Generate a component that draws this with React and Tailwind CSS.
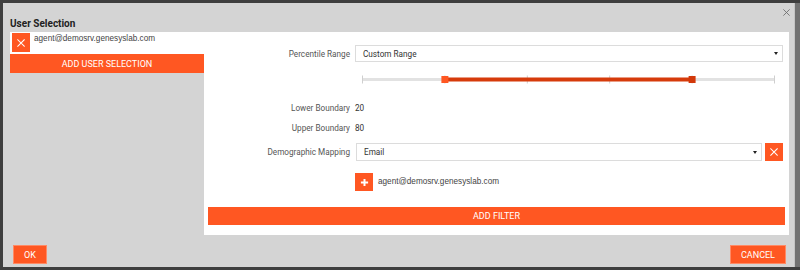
import React from "react";

const XIcon = ({ size = 8, stroke = "#fff", sw = 1.3 }) => (
  <svg width={size} height={size} viewBox="0 0 10 10">
    <path d="M1 1L9 9M9 1L1 9" stroke={stroke} strokeWidth={sw} strokeLinecap="square" />
  </svg>
);

const PlusIcon = () => (
  <svg width="9" height="9" viewBox="0 0 10 10">
    <path d="M5 1V9M1 5H9" stroke="#fff" strokeWidth="2.2" />
  </svg>
);

const Caret = () => (
  <svg width="4" height="3" viewBox="0 0 4 3">
    <path d="M0 0H4L2 3Z" fill="#222" />
  </svg>
);

const Slider = () => {
  const w = 413;
  const step = (w - 1) / 5;
  const ticks = [0, 1, 2, 3, 4, 5].map((i) => 0.5 + i * step);
  const lo = ticks[1];
  const hi = ticks[4];
  return (
    <svg width={w} height="9" viewBox={`0 0 ${w} 9`}>
      <line x1="0" y1="4.5" x2={w} y2="4.5" stroke="#e2e2e2" strokeWidth="3" />
      {ticks.map((t, i) => (
        <line key={i} x1={t} y1="0.5" x2={t} y2="8.5" stroke="#cfcfcf" strokeWidth="1" />
      ))}
      <line x1={lo} y1="4.5" x2={hi} y2="4.5" stroke="#d63b0b" strokeWidth="3.8" />
      <rect x={lo - 3.5} y="1" width="7" height="7" fill="#ff5722" />
      <rect x={hi - 3.5} y="1" width="7" height="7" fill="#d2380a" />
    </svg>
  );
};

export default function App() {
  const roboto = { fontFamily: "Roboto, 'Liberation Sans', sans-serif" };
  return (
    <div className="w-[800px] h-[270px] bg-[#3e3e3e] pt-[3px] pl-[3px] overflow-hidden flex" style={roboto}>
      <div className="relative w-[792px] h-[264px] bg-[#d4d4d4] border-r border-[#c4c4c4] flex flex-col shrink-0">
        <div className="absolute top-[4px] right-[3px] w-[10px] h-[10px] flex items-center justify-center">
          <XIcon size={7} stroke="#6a6a6a" sw={1.2} />
        </div>

        <div className="h-[29px] pt-[15px] pl-[7px] text-[10px] leading-[12px] font-bold text-[#222]">
          User Selection
        </div>

        <div className="flex ml-[7px] mr-[5px]">
          <div className="w-[194px] flex flex-col">
            <div className="h-[22px] bg-white flex items-start">
              <div className="mt-[1px] ml-[2px] w-[18px] h-[19px] bg-[#ff5722] flex items-center justify-center">
                <XIcon size={8} />
              </div>
              <div
                className="ml-[4px] mt-[2px] text-[8.2px] leading-[10px] text-[#444]"
                style={{ fontFamily: "'Liberation Sans', Arial, sans-serif" }}
              >
                agent@demosrv.genesyslab.com
              </div>
            </div>
            <div className="h-[19px] bg-[#ff5722] flex items-center justify-center text-white text-[9px] leading-[10px]">
              ADD USER SELECTION
            </div>
          </div>

          <div className="w-[585px] h-[203px] bg-white flex flex-col">
            <div className="mt-[13px] h-[17px] flex items-center">
              <div className="w-[146px] text-right text-[8.2px] leading-[10px] text-[#555]">Percentile Range</div>
              <div className="ml-[5px] w-[428px] h-[17px] border border-[#dcdcdc] flex items-center justify-between pl-[7px] pr-[4px]">
                <span className="text-[8.2px] leading-[10px] text-[#333]">Custom Range</span>
                <Caret />
              </div>
            </div>

            <div className="mt-[13px] ml-[158px] h-[9px] flex">
              <Slider />
            </div>

            <div className="mt-[18px] h-[12px] flex items-center text-[8.2px] leading-[10px]">
              <div className="w-[146px] text-right text-[#555]">Lower Boundary</div>
              <div className="ml-[5px] text-[#333]">20</div>
            </div>

            <div className="mt-[8px] h-[12px] flex items-center text-[8.2px] leading-[10px]">
              <div className="w-[146px] text-right text-[#555]">Upper Boundary</div>
              <div className="ml-[5px] text-[#333]">80</div>
            </div>

            <div className="mt-[9px] h-[18px] flex items-center">
              <div className="w-[146px] text-right text-[8.2px] leading-[10px] text-[#555]">Demographic Mapping</div>
              <div className="ml-[6px] w-[406px] h-[18px] border border-[#dcdcdc] flex items-center justify-between pl-[7px] pr-[4px]">
                <span className="text-[8.2px] leading-[10px] text-[#333]">Email</span>
                <Caret />
              </div>
              <div className="ml-[3px] w-[18px] h-[18px] bg-[#ff5722] flex items-center justify-center">
                <XIcon size={8} />
              </div>
            </div>

            <div className="mt-[12px] ml-[151px] h-[18px] flex items-center">
              <div className="w-[18px] h-[18px] bg-[#ff5722] flex items-center justify-center">
                <PlusIcon />
              </div>
              <div
                className="ml-[5px] text-[8.2px] leading-[10px] text-[#444]"
                style={{ fontFamily: "'Liberation Sans', Arial, sans-serif" }}
              >
                agent@demosrv.genesyslab.com
              </div>
            </div>

            <div className="mt-[16px] ml-[4px] w-[577px] h-[18px] bg-[#ff5722] flex items-center justify-center text-white text-[9px] leading-[10px]">
              ADD FILTER
            </div>
          </div>
        </div>

        <div className="mt-[10px] flex justify-between pl-[10px] pr-[8px]">
          <div className="w-[34px] h-[19px] bg-[#ff5722] border border-[#ff8a65] flex items-center justify-center text-white text-[9px] leading-[10px]">
            OK
          </div>
          <div className="w-[56px] h-[19px] bg-[#ff5722] border border-[#ff8a65] flex items-center justify-center text-white text-[9px] leading-[10px]">
            CANCEL
          </div>
        </div>
      </div>
      <div className="w-[5px] h-[264px] bg-[#727272] shrink-0"></div>
    </div>
  );
}
